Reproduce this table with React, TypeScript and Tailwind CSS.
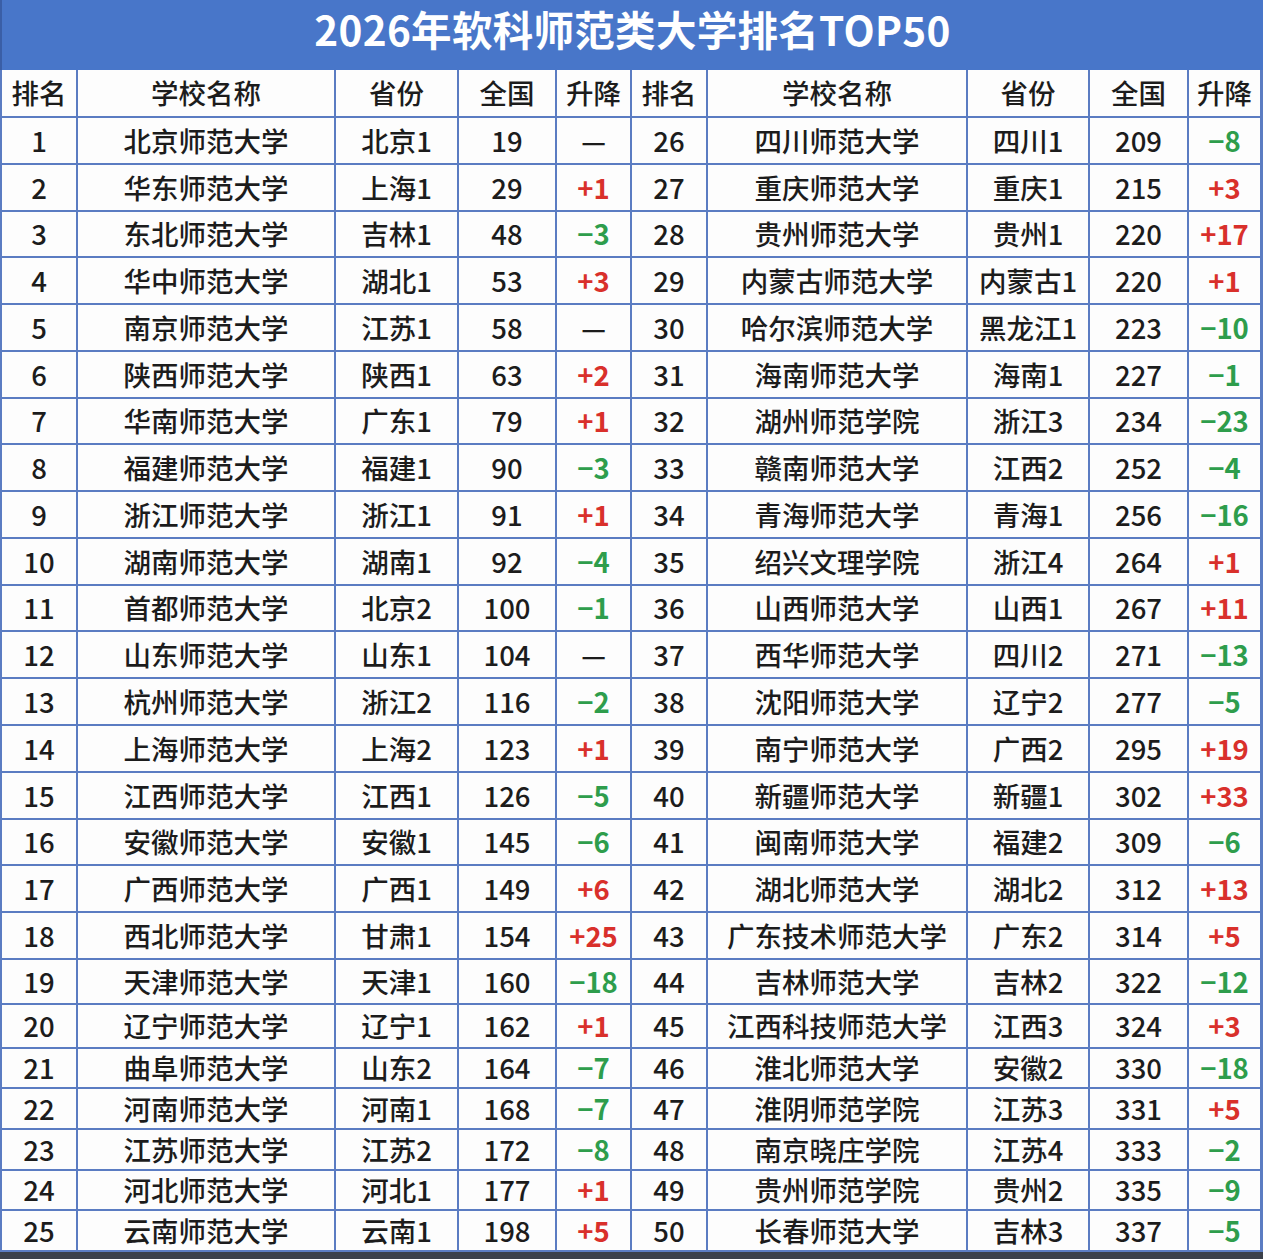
import React from "react";

type Row = [string, string, string, string, string];

const M = "\u2212";

const left: Row[] = [
  ["1", "北京师范大学", "北京1", "19", "—"],
  ["2", "华东师范大学", "上海1", "29", "+1"],
  ["3", "东北师范大学", "吉林1", "48", M + "3"],
  ["4", "华中师范大学", "湖北1", "53", "+3"],
  ["5", "南京师范大学", "江苏1", "58", "—"],
  ["6", "陕西师范大学", "陕西1", "63", "+2"],
  ["7", "华南师范大学", "广东1", "79", "+1"],
  ["8", "福建师范大学", "福建1", "90", M + "3"],
  ["9", "浙江师范大学", "浙江1", "91", "+1"],
  ["10", "湖南师范大学", "湖南1", "92", M + "4"],
  ["11", "首都师范大学", "北京2", "100", M + "1"],
  ["12", "山东师范大学", "山东1", "104", "—"],
  ["13", "杭州师范大学", "浙江2", "116", M + "2"],
  ["14", "上海师范大学", "上海2", "123", "+1"],
  ["15", "江西师范大学", "江西1", "126", M + "5"],
  ["16", "安徽师范大学", "安徽1", "145", M + "6"],
  ["17", "广西师范大学", "广西1", "149", "+6"],
  ["18", "西北师范大学", "甘肃1", "154", "+25"],
  ["19", "天津师范大学", "天津1", "160", M + "18"],
  ["20", "辽宁师范大学", "辽宁1", "162", "+1"],
  ["21", "曲阜师范大学", "山东2", "164", M + "7"],
  ["22", "河南师范大学", "河南1", "168", M + "7"],
  ["23", "江苏师范大学", "江苏2", "172", M + "8"],
  ["24", "河北师范大学", "河北1", "177", "+1"],
  ["25", "云南师范大学", "云南1", "198", "+5"],
];

const right: Row[] = [
  ["26", "四川师范大学", "四川1", "209", M + "8"],
  ["27", "重庆师范大学", "重庆1", "215", "+3"],
  ["28", "贵州师范大学", "贵州1", "220", "+17"],
  ["29", "内蒙古师范大学", "内蒙古1", "220", "+1"],
  ["30", "哈尔滨师范大学", "黑龙江1", "223", M + "10"],
  ["31", "海南师范大学", "海南1", "227", M + "1"],
  ["32", "湖州师范学院", "浙江3", "234", M + "23"],
  ["33", "赣南师范大学", "江西2", "252", M + "4"],
  ["34", "青海师范大学", "青海1", "256", M + "16"],
  ["35", "绍兴文理学院", "浙江4", "264", "+1"],
  ["36", "山西师范大学", "山西1", "267", "+11"],
  ["37", "西华师范大学", "四川2", "271", M + "13"],
  ["38", "沈阳师范大学", "辽宁2", "277", M + "5"],
  ["39", "南宁师范大学", "广西2", "295", "+19"],
  ["40", "新疆师范大学", "新疆1", "302", "+33"],
  ["41", "闽南师范大学", "福建2", "309", M + "6"],
  ["42", "湖北师范大学", "湖北2", "312", "+13"],
  ["43", "广东技术师范大学", "广东2", "314", "+5"],
  ["44", "吉林师范大学", "吉林2", "322", M + "12"],
  ["45", "江西科技师范大学", "江西3", "324", "+3"],
  ["46", "淮北师范大学", "安徽2", "330", M + "18"],
  ["47", "淮阴师范学院", "江苏3", "331", "+5"],
  ["48", "南京晓庄学院", "江苏4", "333", M + "2"],
  ["49", "贵州师范学院", "贵州2", "335", M + "9"],
  ["50", "长春师范大学", "吉林3", "337", M + "5"],
];

const headers = ["排名", "学校名称", "省份", "全国", "升降", "排名", "学校名称", "省份", "全国", "升降"];

function changeColor(v: string) {
  if (v.startsWith("+")) return "text-[#d9302b] font-semibold";
  if (v.startsWith(M)) return "text-[#2e9d4c] font-semibold";
  return "text-[#1c1c1c]";
}

function Cell({ children, cls = "text-[#1c1c1c]" }: { children: React.ReactNode; cls?: string }) {
  return (
    <div className={`bg-[#fdfdfd] flex items-center justify-center leading-none whitespace-nowrap ${cls}`}>
      {children}
    </div>
  );
}

export default function App() {
  const cells: React.ReactNode[] = [];
  headers.forEach((h, i) => cells.push(<Cell key={`h${i}`}>{h}</Cell>));
  left.forEach((l, i) => {
    const r = right[i];
    cells.push(<Cell key={`a${i}0`}>{l[0]}</Cell>);
    cells.push(<Cell key={`a${i}1`}>{l[1]}</Cell>);
    cells.push(<Cell key={`a${i}2`}>{l[2]}</Cell>);
    cells.push(<Cell key={`a${i}3`}>{l[3]}</Cell>);
    cells.push(<Cell key={`a${i}4`} cls={changeColor(l[4])}>{l[4]}</Cell>);
    cells.push(<Cell key={`b${i}0`}>{r[0]}</Cell>);
    cells.push(<Cell key={`b${i}1`}>{r[1]}</Cell>);
    cells.push(<Cell key={`b${i}2`}>{r[2]}</Cell>);
    cells.push(<Cell key={`b${i}3`}>{r[3]}</Cell>);
    cells.push(<Cell key={`b${i}4`} cls={changeColor(r[4])}>{r[4]}</Cell>);
  });

  return (
    <div
      className="w-[1263px] h-[1259px] bg-[#3b404a] flex flex-col overflow-hidden"
      style={{ fontFamily: '"Noto Sans CJK SC", "Noto Sans", sans-serif' }}
    >
      <div className="h-[70px] shrink-0 bg-[#4876c9] border-l-[2px] border-[#3a5ea6] flex items-center justify-center">
        <span className="text-white font-bold text-[40.5px] leading-none tracking-[0.3px] pb-[11px]">
          2026年软科师范类大学排名TOP50
        </span>
      </div>
      <div
        className="grid shrink-0 bg-[#5b7cc2] gap-[2px] pl-[2px] pr-[3px] pb-[2px] text-[27.5px] font-medium grid-cols-[74px_256px_121px_96px_73px_74px_258px_120px_97px_71px] grid-rows-[46px_45px_45px_44px_45px_45px_45px_44px_45px_45px_45px_44px_45px_45px_45px_45px_44px_45px_45px_43px_42px_38px_39px_39px_38px_39px]"
      >
        {cells}
      </div>
      <div className="flex-1 bg-[#3b404a]" />
    </div>
  );
}
